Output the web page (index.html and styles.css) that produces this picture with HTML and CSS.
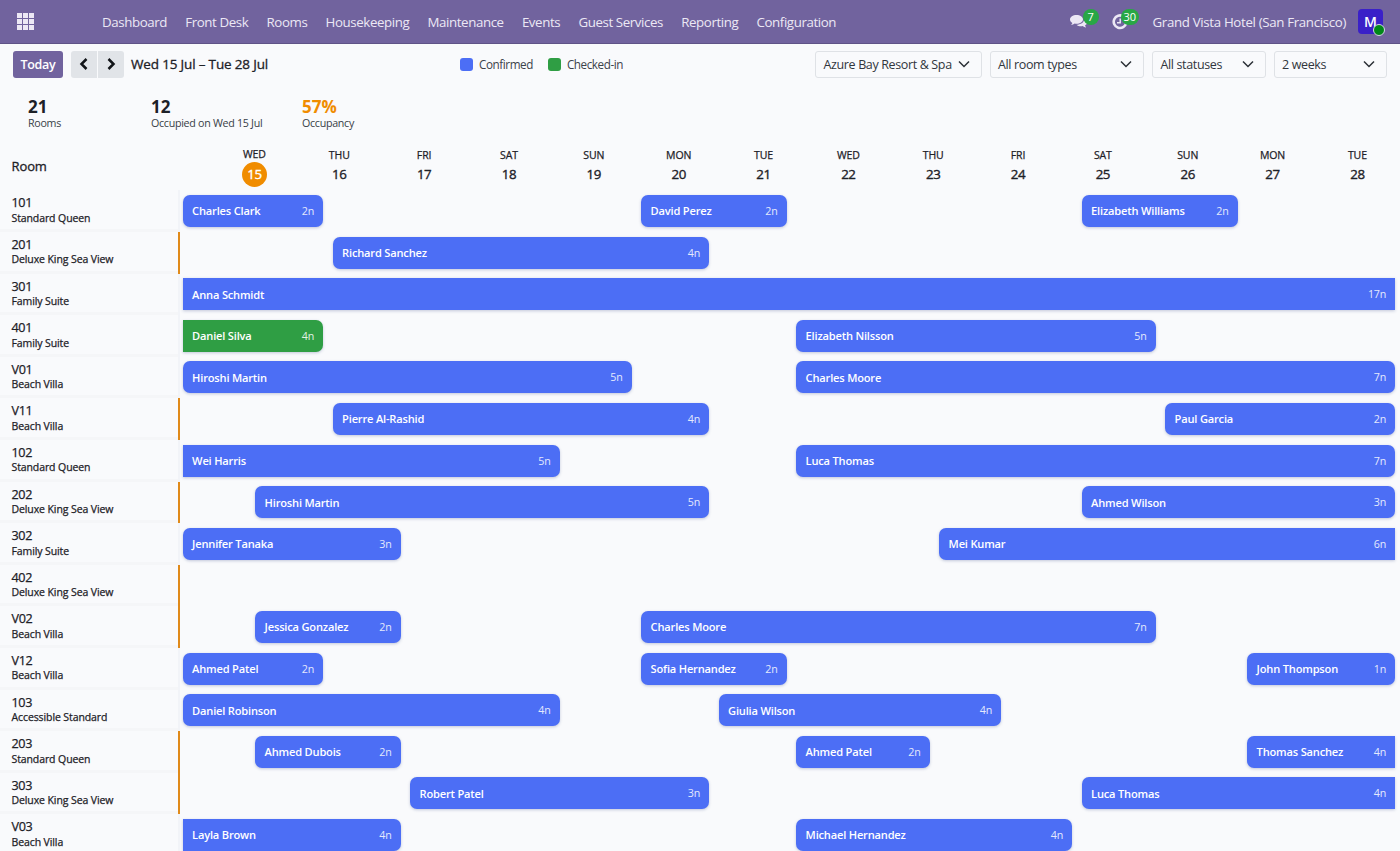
FILE: index.html
```html
<!DOCTYPE html>
<html lang="en">
<head>
    <meta charset="UTF-8">
    <meta name="viewport" content="width=device-width, initial-scale=1.0">
    <title>Front Desk</title>
    <link rel="stylesheet" href="styles.css">
</head>
<body>
    <header class="navbar">
        <svg class="apps-icon" viewBox="0 0 17 17" fill="currentColor">
            <path d="M0 0h5v5H0zM6 0h5v5H6zM12 0h5v5h-5zM0 6h5v5H0zM6 6h5v5H6zM12 6h5v5h-5zM0 12h5v5H0zM6 12h5v5H6zM12 12h5v5h-5z"/>
        </svg>
        <nav class="menu">
            <a>Dashboard</a>
            <a>Front Desk</a>
            <a>Rooms</a>
            <a>Housekeeping</a>
            <a>Maintenance</a>
            <a>Events</a>
            <a>Guest Services</a>
            <a>Reporting</a>
            <a>Configuration</a>
        </nav>
        <div class="systray">
            <span class="tray-item">
                <svg class="tray-icon" width="17" height="16" viewBox="0 0 17 16" fill="currentColor">
                    <path d="M6.500 1C2.900 1 0 2.900 0 5.400c0 1.400.9 2.600 2.400 3.500-.3.900-.8 1.400-1.300 2 1.300 0 2.600-.6 3.600-1.400.6.100 1.200.2 1.800.2 3.600 0 6.500-2 6.500-4.300S10.100 1 6.500 1z"/>
                    <path d="M14.100 5.300c0 3.200-3.500 5.500-7.600 5.500 1.100 1 2.800 1.500 4.500 1.500.6 0 1.100-.1 1.600-.2 1 .8 2.200 1.300 3.600 1.400-.5-.5-.9-1.100-1.200-1.900C16.300 10.800 17 9.800 17 8.600c0-1.300-1.100-2.500-2.900-3.300z"/>
                </svg>
                <span class="badge">7</span>
            </span>
            <span class="tray-item tray-clock">
                <svg class="tray-icon" width="16" height="16" viewBox="0 0 16 16" fill="none" stroke="currentColor">
                    <path d="M11.200 2.300A6.300 6.300 0 1 0 14.200 9" stroke-width="2.600"/>
                    <path d="M8.200 4.500v4.200H5" stroke-width="1.500"/>
                </svg>
                <span class="badge">30</span>
            </span>
            <span class="company">Grand Vista Hotel (San Francisco)</span>
            <span class="avatar">M<span class="online"></span></span>
        </div>
    </header>

    <section class="toolbar">
        <button class="btn-today">Today</button>
        <div class="pager">
            <button><svg width="10" height="12" viewBox="0 0 10 12"><path d="M7.500 1L2.500 6l5 5"/></svg></button>
            <button><svg width="10" height="12" viewBox="0 0 10 12"><path d="M2.500 1l5 5-5 5"/></svg></button>
        </div>
        <span class="range">Wed 15 Jul – Tue 28 Jul</span>
        <div class="legend">
            <span><i class="dot confirmed"></i>Confirmed</span>
            <span><i class="dot checked-in"></i>Checked-in</span>
        </div>
        <div class="filters">
            <div class="select s-hotel"><span>Azure Bay Resort &amp; Spa</span><svg viewBox="0 0 12 8"><path d="M1 1.500l5 5 5-5"/></svg></div>
            <div class="select s-types"><span>All room types</span><svg viewBox="0 0 12 8"><path d="M1 1.500l5 5 5-5"/></svg></div>
            <div class="select s-status"><span>All statuses</span><svg viewBox="0 0 12 8"><path d="M1 1.500l5 5 5-5"/></svg></div>
            <div class="select s-period"><span>2 weeks</span><svg viewBox="0 0 12 8"><path d="M1 1.500l5 5 5-5"/></svg></div>
        </div>
    </section>

    <section class="stats">
        <div><b>21</b><small>Rooms</small></div>
        <div><b>12</b><small>Occupied on Wed 15 Jul</small></div>
        <div class="occupancy"><b>57%</b><small>Occupancy</small></div>
    </section>

    <div class="days">
        <div class="days-title">Room</div>
        <div class="day today">WED<b>15</b></div>
        <div class="day">THU<b>16</b></div>
        <div class="day">FRI<b>17</b></div>
        <div class="day">SAT<b>18</b></div>
        <div class="day">SUN<b>19</b></div>
        <div class="day">MON<b>20</b></div>
        <div class="day">TUE<b>21</b></div>
        <div class="day">WED<b>22</b></div>
        <div class="day">THU<b>23</b></div>
        <div class="day">FRI<b>24</b></div>
        <div class="day">SAT<b>25</b></div>
        <div class="day">SUN<b>26</b></div>
        <div class="day">MON<b>27</b></div>
        <div class="day">TUE<b>28</b></div>
    </div>

    <main class="rooms" id="rooms"></main>

    <script src="script.js"></script>
</body>
</html>
```
FILE: styles.css
```css
* {
    box-sizing: border-box;
}
body {
    margin: 0;
    height: 851px;
    overflow: hidden;
    background-color: #f9fafc;
    color: #1d2127;
    font-family: 'Segoe UI', 'Open Sans', 'Noto Sans', sans-serif;
    font-size: 13px;
}
button {
    font-family: inherit;
    border: none;
    padding: 0;
}
svg {
    display: block;
}

/* top bar */
.navbar {
    display: flex;
    align-items: center;
    height: 44px;
    padding: 0 17px;
    background-color: #71639e;
    border-bottom: 1px solid #5f5387;
    color: #ece8f5;
}
.apps-icon {
    width: 17px;
    height: 17px;
}
.menu {
    display: flex;
    gap: 18.200px;
    margin-left: 68px;
    font-size: 13.300px;
    letter-spacing: -0.400px;
    white-space: nowrap;
}
.systray {
    display: flex;
    align-items: center;
    margin-left: auto;
    white-space: nowrap;
}
.tray-item {
    position: relative;
    width: 42px;
}
.tray-item.tray-clock {
    width: 41px;
}
.badge {
    position: absolute;
    left: 13px;
    top: -5px;
    min-width: 16px;
    height: 16px;
    padding: 0 5px;
    border-radius: 8px;
    background-color: #28a745;
    color: #fff;
    font-size: 11px;
    line-height: 15px;
    text-align: center;
}
.tray-clock .badge {
    left: 9px;
    padding: 0 3px;
}
.company {
    font-size: 13.300px;
    letter-spacing: -0.340px;
}
.avatar {
    position: relative;
    width: 25px;
    height: 25px;
    margin-left: 12px;
    border-radius: 4px;
    background-color: #3a20c8;
    color: #fff;
    font-size: 14px;
    font-weight: 600;
    line-height: 25px;
    text-align: center;
}
.online {
    position: absolute;
    right: -2px;
    bottom: -2px;
    width: 12px;
    height: 12px;
    border: 1px solid #d8d0ea;
    border-radius: 50%;
    background-color: #008818;
}

/* toolbar */
.toolbar {
    display: flex;
    align-items: center;
    height: 40px;
    padding: 0 13px;
    white-space: nowrap;
}
.btn-today {
    width: 50px;
    height: 27px;
    border-radius: 3px;
    background-color: #71639e;
    color: #fff;
    font-size: 12.500px;
    font-weight: 600;
    letter-spacing: -0.300px;
}
.pager {
    display: flex;
    gap: 1px;
    margin-left: 8px;
}
.pager button {
    display: flex;
    align-items: center;
    justify-content: center;
    width: 26px;
    height: 27px;
    border-radius: 3px 0 0 3px;
    background-color: #e1e4e8;
}
.pager button + button {
    border-radius: 0 3px 3px 0;
}
.pager path {
    fill: none;
    stroke: #111418;
    stroke-width: 2.500;
}
.range {
    width: 329px;
    margin-left: 7px;
    font-size: 13.500px;
    letter-spacing: -0.170px;
    -webkit-text-stroke: 0.300px;
}
.legend {
    display: flex;
    gap: 15px;
    font-size: 11.700px;
    letter-spacing: -0.430px;
    color: #3c424a;
}
.legend span {
    display: flex;
    align-items: center;
    gap: 6px;
}
.dot {
    width: 13px;
    height: 13px;
    border-radius: 3px;
}
.confirmed {
    background-color: #4c6ef5;
}
.checked-in {
    background-color: #2f9e44;
}
.filters {
    display: flex;
    gap: 8px;
    margin-left: auto;
}
.select {
    display: flex;
    align-items: center;
    justify-content: space-between;
    height: 27px;
    padding: 0 11px 0 7.500px;
    border: 1px solid #dfe2e6;
    border-radius: 3px;
    font-size: 12.500px;
    letter-spacing: -0.360px;
    color: #31363d;
}
.select svg {
    width: 12px;
    height: 8px;
    fill: none;
    stroke: #2b3036;
    stroke-width: 1.500;
}
.s-hotel {
    width: 166.500px;
}
.s-types {
    width: 154.500px;
}
.s-status,
.s-period {
    width: 113.500px;
}

/* key figures */
.stats {
    display: flex;
    height: 61px;
    padding: 12px 28px 0;
    white-space: nowrap;
}
.stats div {
    display: flex;
    flex-direction: column;
    width: 123px;
}
.stats div:nth-child(2) {
    width: 151px;
}
.stats b {
    font-size: 17px;
    line-height: 21px;
}
.stats small {
    font-size: 10.700px;
    line-height: 13px;
    letter-spacing: -0.290px;
    color: #383e46;
}
.occupancy b {
    color: #f08c00;
}

/* day header */
.days {
    display: grid;
    grid-template-columns: 212px repeat(14, 84.850px);
    height: 45.400px;
}
.days-title {
    padding: 12px 0 0 11.500px;
    font-size: 13px;
    letter-spacing: -0.100px;
    -webkit-text-stroke: 0.300px;
}
.day {
    display: flex;
    flex-direction: column;
    align-items: center;
    padding-top: 3px;
    font-size: 10.500px;
    line-height: 14px;
    letter-spacing: -0.100px;
    -webkit-text-stroke: 0.250px;
}
.day b {
    margin-top: 2px;
    font-size: 13.300px;
    line-height: 21px;
    font-weight: 500;
    letter-spacing: -0.400px;
    -webkit-text-stroke: 0.350px;
}
.day.today {
    padding-top: 2px;
}
.today b {
    width: 25px;
    height: 25px;
    margin-top: 1px;
    border-radius: 50%;
    background-color: #f08c00;
    color: #fff;
    line-height: 24px;
    text-align: center;
}

/* room rows */
.room {
    display: flex;
    height: 41.600px;
}
.room-name {
    width: 180px;
    padding: 5px 0 0 11.500px;
    border-right: 2px solid #f2f4f8;
    background: linear-gradient(#f5f6f8, #f5f6f8) bottom / 100% 3px no-repeat;
    background-clip: padding-box;
    font-size: 12.600px;
    line-height: 16.500px;
    letter-spacing: -0.350px;
    -webkit-text-stroke: 0.250px;
}
.room-name small {
    display: block;
    font-size: 10.500px;
    line-height: 13px;
    letter-spacing: -0.100px;
}
.room.dirty .room-name {
    border-right-color: #e08a1a;
}
.track {
    display: grid;
    grid-template-columns: 72.500px 77.500px 77.500px 159px 72px 77.500px 77.500px 71.500px 71.500px 71.500px 71px 83.500px 82px 157.500px;
    align-items: start;
    padding-top: 4.600px;
    margin-left: -2px;
}
.booking {
    grid-row: 1;
    display: flex;
    align-items: center;
    justify-content: space-between;
    height: 32px;
    margin: 0 4.900px 0 4.600px;
    padding: 0 9px 0 9.500px;
    border-radius: 7px;
    color: #fff;
    font-size: 11.100px;
    font-weight: 600;
    letter-spacing: -0.190px;
    white-space: nowrap;
    box-shadow: 0 1px 3px rgba(30, 50, 120, 0.25);
}
.booking small {
    font-size: 10.700px;
    font-weight: 400;
    opacity: 0.85;
}
.from-before {
    border-top-left-radius: 0;
    border-bottom-left-radius: 0;
}
.goes-on {
    border-top-right-radius: 0;
    border-bottom-right-radius: 0;
}
```
FILE: script.js
```javascript
// booking: [guest, nights, first column, end column, extra classes]
const rooms = [
    { no: '101', type: 'Standard Queen', bookings: [['Charles Clark', 2, 1, 3], ['David Perez', 2, 6, 8], ['Elizabeth Williams', 2, 12, 14]] },
    { no: '201', type: 'Deluxe King Sea View', dirty: true, bookings: [['Richard Sanchez', 4, 3, 7]] },
    { no: '301', type: 'Family Suite', bookings: [['Anna Schmidt', 17, 1, 15, 'from-before goes-on']] },
    { no: '401', type: 'Family Suite', bookings: [['Daniel Silva', 4, 1, 3, 'checked-in from-before'], ['Elizabeth Nilsson', 5, 8, 13]] },
    { no: 'V01', type: 'Beach Villa', bookings: [['Hiroshi Martin', 5, 1, 6], ['Charles Moore', 7, 8, 15]] },
    { no: 'V11', type: 'Beach Villa', dirty: true, bookings: [['Pierre Al-Rashid', 4, 3, 7], ['Paul Garcia', 2, 13, 15]] },
    { no: '102', type: 'Standard Queen', bookings: [['Wei Harris', 5, 1, 5, 'from-before'], ['Luca Thomas', 7, 8, 15]] },
    { no: '202', type: 'Deluxe King Sea View', dirty: true, bookings: [['Hiroshi Martin', 5, 2, 7], ['Ahmed Wilson', 3, 12, 15]] },
    { no: '302', type: 'Family Suite', bookings: [['Jennifer Tanaka', 3, 1, 4], ['Mei Kumar', 6, 10, 15, 'goes-on']] },
    { no: '402', type: 'Deluxe King Sea View', dirty: true, bookings: [] },
    { no: 'V02', type: 'Beach Villa', dirty: true, bookings: [['Jessica Gonzalez', 2, 2, 4], ['Charles Moore', 7, 6, 13]] },
    { no: 'V12', type: 'Beach Villa', bookings: [['Ahmed Patel', 2, 1, 3], ['Sofia Hernandez', 2, 6, 8], ['John Thompson', 1, 14, 15]] },
    { no: '103', type: 'Accessible Standard', bookings: [['Daniel Robinson', 4, 1, 5], ['Giulia Wilson', 4, 7, 11]] },
    { no: '203', type: 'Standard Queen', dirty: true, bookings: [['Ahmed Dubois', 2, 2, 4], ['Ahmed Patel', 2, 8, 10], ['Thomas Sanchez', 4, 14, 15, 'goes-on']] },
    { no: '303', type: 'Deluxe King Sea View', dirty: true, bookings: [['Robert Patel', 3, 4, 7], ['Luca Thomas', 4, 12, 15, 'goes-on']] },
    { no: 'V03', type: 'Beach Villa', bookings: [['Layla Brown', 4, 1, 4, 'from-before'], ['Michael Hernandez', 4, 8, 12]] }
];

document.getElementById('rooms').innerHTML = rooms.map(room => `
    <div class="room ${room.dirty ? 'dirty' : ''}">
        <div class="room-name">${room.no}<small>${room.type}</small></div>
        <div class="track">
            ${room.bookings.map(([guest, nights, from, to, extra]) => `
                <div class="booking confirmed ${extra || ''}" style="grid-column: ${from} / ${to}">${guest}<small>${nights}n</small></div>
            `).join('')}
        </div>
    </div>
`).join('');
```
